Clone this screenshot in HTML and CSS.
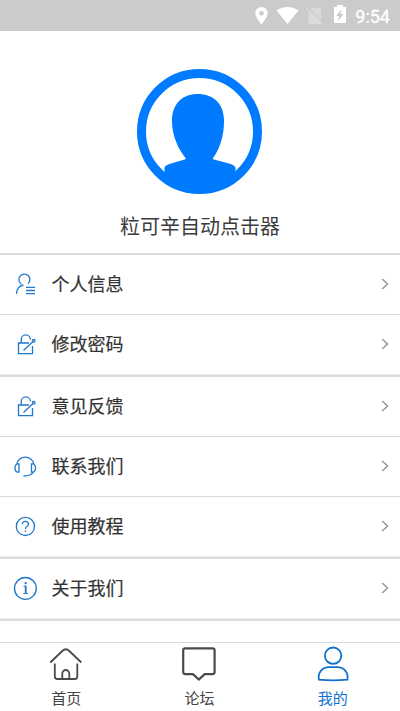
FILE: index.html
```html
<!DOCTYPE html>
<html lang="zh-CN">
<head>
<meta charset="utf-8">
<title>我的</title>
<link rel="stylesheet" href="styles.css">
</head>
<body>
<div class="screen">
  <header class="status">
    <svg class="status-icons" width="105" height="31" viewBox="0 0 105 31">
      <path fill="#fff" fill-rule="evenodd" d="M11.500 7a6.200 6.200 0 0 0-6.200 6.200c0 4.300 6.200 11 6.200 11s6.200-6.700 6.200-11A6.200 6.200 0 0 0 11.500 7zm0 4a2.300 2.300 0 1 1 0 4.600 2.300 2.300 0 0 1 0-4.600z"/>
      <path fill="#fff" d="M37.500 24 26.500 10.500Q31 7 37.500 7t11 3.500z"/>
      <path fill="#dadada" d="M62 8h9v16H58.500V11.500z"/>
      <path stroke="#cbcbcb" stroke-width="1.300" d="m58.500 8.500 14 14.500"/>
      <path stroke="#dedede" stroke-width="1.300" d="m57 9 15 15.500"/>
      <path fill="#fff" fill-rule="evenodd" d="M87 5h6v2h3v16H84V7h3zm4.500 4.500-5.500 6.500h3.200L87.700 21l6-7h-3.200z"/>
    </svg>
    <span class="clock">9:54</span>
  </header>
  <main class="content">
    <section class="profile">
      <svg class="avatar" width="126" height="126" viewBox="0 0 126 126">
        <circle cx="62.500" cy="63.500" r="58" fill="#fff" stroke="#007aff" stroke-width="9"/>
        <path fill="#007aff" d="M60.500 26C76.500 26 86.500 35.500 87 51.500c.3 16-4.500 30-11 38.500v1.200l16 4.300c4.500 1.500 6 2.500 6.500 4.500v8A58 58 0 0 1 27.500 108v-8c.5-2 2-3 6.500-4.500l14.500-4.300V90C41.500 81.500 34.500 67.500 35 51.500 35.500 35.500 45.500 26 60.500 26z"/>
      </svg>
      <h1 class="name">粒可辛自动点击器</h1>
    </section>
    <nav class="menu">
      <div class="group">
        <a class="row">
          <svg class="icon" width="24" height="24" viewBox="0 0 24 24"><path d="M9.500 12.200a5.500 5.500 0 1 1 6.500-.5M4.500 22c0-5 2.500-8 7-9M14 15.300h9M14 18.500h9M14 21.700h9"/></svg>
          <span class="label">个人信息</span>
          <svg class="chevron" width="8" height="12" viewBox="0 0 8 12"><path d="m1.200 1 5.300 5-5.300 5"/></svg>
        </a>
        <a class="row">
          <svg class="icon" width="24" height="24" viewBox="0 0 24 24"><path d="M17 11H6.500v10.700h14V14M9.200 11V7.500a4.600 4.600 0 0 1 9.200 0M11.500 18.500l9-8.500"/><circle cx="21.700" cy="8.800" r="1.300"/></svg>
          <span class="label">修改密码</span>
          <svg class="chevron" width="8" height="12" viewBox="0 0 8 12"><path d="m1.200 1 5.300 5-5.300 5"/></svg>
        </a>
      </div>
      <div class="group">
        <a class="row">
          <svg class="icon" width="24" height="24" viewBox="0 0 24 24"><path d="M17 11H6.500v10.700h14V14M9.200 11V7.500a4.600 4.600 0 0 1 9.200 0M11.500 18.500l9-8.500"/><circle cx="21.700" cy="8.800" r="1.300"/></svg>
          <span class="label">意见反馈</span>
          <svg class="chevron" width="8" height="12" viewBox="0 0 8 12"><path d="m1.200 1 5.300 5-5.300 5"/></svg>
        </a>
        <a class="row">
          <svg class="icon" width="24" height="24" viewBox="0 0 24 24"><path d="M4.800 10a8.700 8.700 0 0 1 17 0M7 9.800v8.400h-1c-4-.5-4-8 0-8.400zM19.500 9.800v8.400h1c4-.5 4-8 0-8.400zM21.500 18c-1.500 2.500-4.500 4-10 4"/></svg>
          <span class="label">联系我们</span>
          <svg class="chevron" width="8" height="12" viewBox="0 0 8 12"><path d="m1.200 1 5.300 5-5.300 5"/></svg>
        </a>
        <a class="row">
          <svg class="icon" width="24" height="24" viewBox="0 0 24 24"><circle cx="13.400" cy="12.400" r="9.100"/><path d="M10.300 10.300c0-4 6.200-4 6.200 0 0 2-3.100 2.200-3.100 4.700M13.400 16.600v1.400"/></svg>
          <span class="label">使用教程</span>
          <svg class="chevron" width="8" height="12" viewBox="0 0 8 12"><path d="m1.200 1 5.300 5-5.300 5"/></svg>
        </a>
      </div>
      <div class="group">
        <a class="row">
          <svg class="icon" width="24" height="24" viewBox="0 0 24 24"><circle cx="13.400" cy="12.400" r="10.900"/><path stroke-width="1" d="M11.500 10.200h2M11.300 17.500h4.600"/><path stroke-width="1.800" d="M13.600 6v2.200M13.700 9.800v7.700"/></svg>
          <span class="label">关于我们</span>
          <svg class="chevron" width="8" height="12" viewBox="0 0 8 12"><path d="m1.200 1 5.300 5-5.300 5"/></svg>
        </a>
      </div>
    </nav>
  </main>
  <footer class="tabs">
    <a class="tab">
      <svg class="tab-icon" width="36" height="38" viewBox="0 0 36 38"><path d="M2.300 19.500 14.300 8q3.500-3.500 7 0l12 11.500M6.800 20.500v13q0 2.500 2.500 2.500h17.500q2.500 0 2.500-2.500v-13M14.300 36v-5.500a3.500 3.500 0 0 1 7 0V36"/></svg>
      <span>首页</span>
    </a>
    <a class="tab">
      <svg class="tab-icon tab-icon-forum" width="36" height="38" viewBox="0 0 36 38"><path d="M4.200 5.300h27.400q2 0 2 2v21.800q0 2-2 2h-8L17.900 36.500l-6-5.400H4.200q-2 0-2-2V7.300q0-2 2-2z"/></svg>
      <span>论坛</span>
    </a>
    <a class="tab tab-active">
      <svg class="tab-icon" width="36" height="38" viewBox="0 0 36 38"><circle cx="18.100" cy="12.700" r="8.200"/><path d="M3.900 36.700c-1.500-7.500 4-12.500 10-12.500h8.500c6 0 11.500 5 10 12.500q-14.300 1.200-28.500 0z"/></svg>
      <span>我的</span>
    </a>
  </footer>
</div>
</body>
</html>
```

FILE: styles.css
```css
* {
  box-sizing: border-box;
}

body {
  margin: 0;
  background: #fff;
  color: #333;
  font-family: "Noto Sans CJK SC", sans-serif;
}

.screen {
  display: flex;
  flex-direction: column;
  height: 711px;
  overflow: hidden;
}

.status {
  display: flex;
  flex: none;
  justify-content: flex-end;
  height: 31px;
  padding-right: 10px;
  background: #cbcbcb;
}

.clock {
  width: 35px;
  color: #fff;
  font: 400 18px/33px Roboto, sans-serif;
  text-align: right;
  white-space: nowrap;
  -webkit-text-stroke: 0.300px #fff;
}

.status-icons {
  flex: none;
}

.content {
  flex: 1;
  min-height: 0;
  overflow: hidden;
}

.profile {
  display: flex;
  flex-direction: column;
  align-items: center;
  height: 222px;
  padding-top: 37px;
}

.avatar {
  flex: none;
}

.name {
  margin: 17px 0 0;
  color: #3c3c3c;
  font-size: 20px;
  font-weight: 400;
  line-height: 30px;
}

.menu {
  border-top: 2px solid #dbdbdb;
}

.group {
  border-bottom: 2px solid #dbdbdb;
}

.row {
  display: flex;
  align-items: center;
  height: 60px;
  padding: 0 11px 1px 12px;
  border-bottom: 1px solid #d9d9d9;
}

.row:last-child {
  border-bottom-color: #ececec;
}

.icon {
  flex: none;
  overflow: visible;
  fill: none;
  stroke: #1f78cc;
  stroke-width: 1.300;
}

.label {
  flex: 1;
  margin-left: 15.500px;
  padding-bottom: 2px;
  font-size: 18px;
  line-height: 28px;
  -webkit-text-stroke: 0.200px #333;
}

.chevron {
  fill: none;
  stroke: #999;
  stroke-width: 1.500;
}

.tabs {
  display: flex;
  flex: none;
  height: 69px;
  border-top: 1px solid #d9d9d9;
}

.tab {
  display: flex;
  flex: 1;
  flex-direction: column;
  align-items: center;
  padding-right: 1px;
  color: #444;
  font-size: 15px;
  line-height: 22px;
}

.tab-icon {
  flex: none;
  margin-bottom: 6px;
  overflow: visible;
  fill: none;
  stroke: #4a4a4a;
  stroke-width: 1.800;
}

.tab-icon-forum {
  stroke-width: 2.200;
}

.tab-active {
  color: #0f70cf;
}

.tab-active .tab-icon {
  stroke: #0f70cf;
}
```
